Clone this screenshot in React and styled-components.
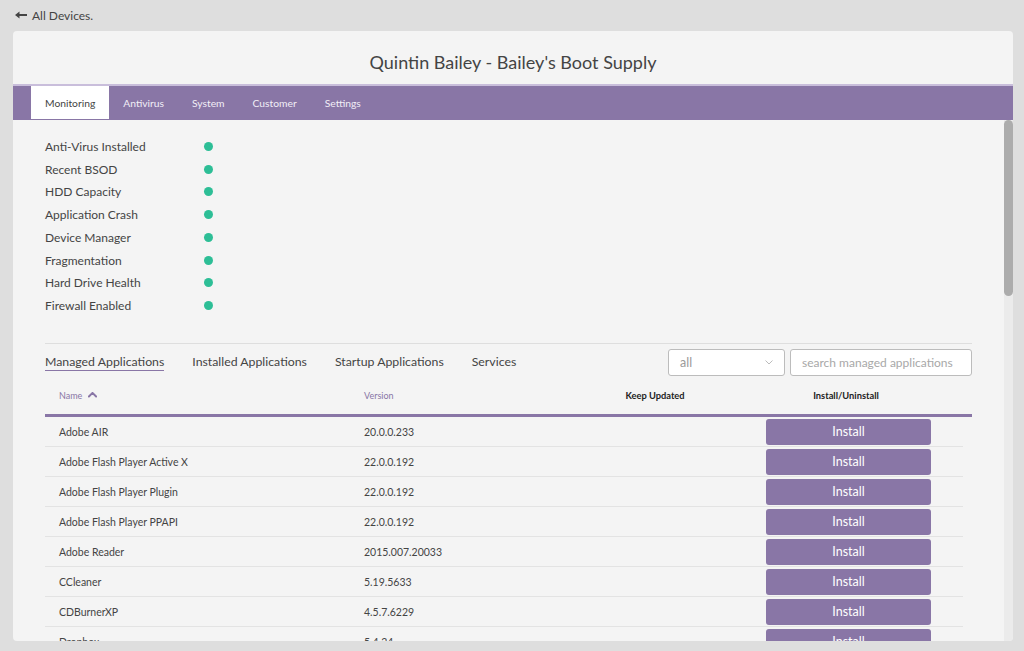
import React from "react";
import styled, { createGlobalStyle } from "styled-components";

const PURPLE = "#8976a6";
const FONT = `"Lato", "Open Sans", sans-serif`;

const Global = createGlobalStyle`
  html, body { margin: 0; padding: 0; }
  body {
    background: #dedede;
    font-family: ${FONT};
    color: #444;
    -webkit-font-smoothing: antialiased;
  }
  * { box-sizing: border-box; }
`;

const Page = styled.div`
  width: 1024px;
  height: 651px;
  padding: 0 11px 10px 13px;
  display: flex;
  flex-direction: column;
  overflow: hidden;
`;

const BackLink = styled.a`
  height: 31px;
  display: flex;
  align-items: center;
  gap: 5px;
  padding: 0 0 1px 2px;
  font-size: 12px;
  color: #444;
  text-decoration: none;
  cursor: pointer;
`;

const Card = styled.div`
  flex: 1;
  min-height: 0;
  background: #f4f4f4;
  border-radius: 4px;
  display: flex;
  flex-direction: column;
  overflow: hidden;
`;

const Header = styled.div`
  height: 53px;
  display: flex;
  align-items: flex-end;
  justify-content: center;
  padding-bottom: 10px;
`;

const Title = styled.h1`
  margin: 0;
  font-size: 18px;
  line-height: 24px;
  font-weight: 400;
  color: #444;
`;

const TabBar = styled.nav`
  height: 36px;
  background: ${PURPLE};
  border-top: 2px solid #c9bedb;
  display: flex;
  align-items: stretch;
  padding-left: 18px;
`;

const Tab = styled.button`
  border: none;
  background: ${(p) => (p.$active ? "#fff" : "transparent")};
  color: ${(p) => (p.$active ? "#444" : "#f2eef7")};
  font-family: ${FONT};
  font-size: 10.3px;
  padding: 0 14px;
  margin-bottom: 1px;
  cursor: pointer;
`;

const Body = styled.div`
  flex: 1;
  min-height: 0;
  display: flex;
`;

const Scroll = styled.div`
  flex: 1;
  min-width: 0;
  overflow: hidden;
  padding: 15px 32px 0 32px;
`;

const ScrollTrack = styled.div`
  width: 9px;
  background: #ebebeb;
  display: flex;
  flex-direction: column;
`;

const ScrollThumb = styled.div`
  height: 176px;
  background: #acacac;
  border-radius: 5px;
`;

const StatusList = styled.ul`
  list-style: none;
  margin: 0;
  padding: 0 0 26px;
  border-bottom: 1px solid #dedede;
`;

const StatusRow = styled.li`
  display: flex;
  align-items: center;
  height: 22.75px;
  font-size: 12px;
  color: #444;
`;

const StatusLabel = styled.span`
  width: 159px;
`;

const Dot = styled.span`
  width: 9px;
  height: 9px;
  border-radius: 50%;
  background: ${(p) => p.$color || "#2dbe96"};
`;

const Toolbar = styled.div`
  display: flex;
  align-items: center;
  padding-top: 4px;
  height: 32px;
`;

const SubTabs = styled.div`
  display: flex;
  gap: 28px;
  flex: 1;
`;

const SubTab = styled.span`
  font-size: 12.3px;
  color: #444;
  padding-bottom: 1px;
  border-bottom: 1px solid ${(p) => (p.$active ? PURPLE : "transparent")};
  cursor: pointer;
`;

const Select = styled.div`
  width: 117px;
  height: 27px;
  border: 1px solid #bcbcbc;
  border-radius: 3px;
  background: #fff;
  display: flex;
  align-items: center;
  justify-content: space-between;
  padding: 0 11px;
  font-size: 12.5px;
  color: #9a9a9a;
  margin-right: 5px;
`;

const Search = styled.input`
  width: 182px;
  height: 27px;
  border: 1px solid #bcbcbc;
  border-radius: 3px;
  background: #fff;
  padding: 0 11px;
  font-family: ${FONT};
  font-size: 12px;
  color: #444;
  &::placeholder { color: #a8a8a8; }
`;

const cols = "305px 200px 210px 172px 1fr";

const HeadRow = styled.div`
  display: grid;
  grid-template-columns: ${cols};
  align-items: center;
  height: 41px;
  border-bottom: 3px solid ${PURPLE};
`;

const HeadCell = styled.div`
  font-size: ${(p) => (p.$dark ? 9.3 : 9)}px;
  font-weight: ${(p) => (p.$dark ? 700 : 400)};
  color: ${(p) => (p.$dark ? "#222" : PURPLE)};
  padding-left: ${(p) => (p.$center ? 0 : 14)}px;
  display: flex;
  align-items: center;
  justify-content: ${(p) => (p.$center ? "center" : "flex-start")};
  gap: 6px;
`;

const Row = styled.div`
  display: grid;
  grid-template-columns: ${cols};
  align-items: center;
  height: 30px;
  margin-right: 9px;
  border-bottom: 1px solid #e3e3e3;
  font-size: 10.5px;
  color: #444;
`;

const Cell = styled.div`
  padding-left: 14px;
`;

const InstallCell = styled.div`
  padding-left: 6px;
`;

const InstallButton = styled.button`
  width: 165px;
  height: 26px;
  border: none;
  border-radius: 3px;
  background: ${PURPLE};
  color: #fff;
  font-family: ${FONT};
  font-size: 12.5px;
  cursor: pointer;
`;

const statuses = [
  "Anti-Virus Installed",
  "Recent BSOD",
  "HDD Capacity",
  "Application Crash",
  "Device Manager",
  "Fragmentation",
  "Hard Drive Health",
  "Firewall Enabled",
];

const apps = [
  ["Adobe AIR", "20.0.0.233"],
  ["Adobe Flash Player Active X", "22.0.0.192"],
  ["Adobe Flash Player Plugin", "22.0.0.192"],
  ["Adobe Flash Player PPAPI", "22.0.0.192"],
  ["Adobe Reader", "2015.007.20033"],
  ["CCleaner", "5.19.5633"],
  ["CDBurnerXP", "4.5.7.6229"],
  ["Dropbox", "5.4.24"],
];

function BackArrow() {
  return (
    <svg width="12" height="8" viewBox="0 0 12 8" aria-hidden="true">
      <path d="M0 4 L4.5 0.5 L4.5 3.1 L12 3.1 L12 4.9 L4.5 4.9 L4.5 7.5 Z" fill="#444" />
    </svg>
  );
}

function Chevron({ up, color = "#999", size = 8 }) {
  return (
    <svg width={size} height={size * 0.6} viewBox="0 0 10 6" aria-hidden="true">
      <path
        d={up ? "M1 5 L5 1 L9 5" : "M1 1 L5 5 L9 1"}
        fill="none"
        stroke={color}
        strokeWidth={up ? 2.2 : 1}
        strokeLinecap="round"
        strokeLinejoin="round"
      />
    </svg>
  );
}

export default function App() {
  return (
    <>
      <Global />
      <Page>
        <BackLink>
          <BackArrow />
          All Devices.
        </BackLink>
        <Card>
          <Header>
            <Title>Quintin Bailey - Bailey's Boot Supply</Title>
          </Header>
          <TabBar>
            {["Monitoring", "Antivirus", "System", "Customer", "Settings"].map((t, i) => (
              <Tab key={t} $active={i === 0}>
                {t}
              </Tab>
            ))}
          </TabBar>
          <Body>
            <Scroll>
              <StatusList>
                {statuses.map((s) => (
                  <StatusRow key={s}>
                    <StatusLabel>{s}</StatusLabel>
                    <Dot />
                  </StatusRow>
                ))}
              </StatusList>
              <Toolbar>
                <SubTabs>
                  <SubTab $active>Managed Applications</SubTab>
                  <SubTab>Installed Applications</SubTab>
                  <SubTab>Startup Applications</SubTab>
                  <SubTab>Services</SubTab>
                </SubTabs>
                <Select>
                  all
                  <Chevron color="#aaa" size={8} />
                </Select>
                <Search placeholder="search managed applications" />
              </Toolbar>
              <HeadRow>
                <HeadCell>
                  Name <Chevron up color={PURPLE} size={9} />
                </HeadCell>
                <HeadCell>Version</HeadCell>
                <HeadCell $dark $center>Keep Updated</HeadCell>
                <HeadCell $dark $center>Install/Uninstall</HeadCell>
                <div />
              </HeadRow>
              {apps.map(([name, ver]) => (
                <Row key={name}>
                  <Cell>{name}</Cell>
                  <Cell>{ver}</Cell>
                  <div />
                  <InstallCell>
                    <InstallButton>Install</InstallButton>
                  </InstallCell>
                  <div />
                </Row>
              ))}
            </Scroll>
            <ScrollTrack>
              <ScrollThumb />
            </ScrollTrack>
          </Body>
        </Card>
      </Page>
    </>
  );
}
